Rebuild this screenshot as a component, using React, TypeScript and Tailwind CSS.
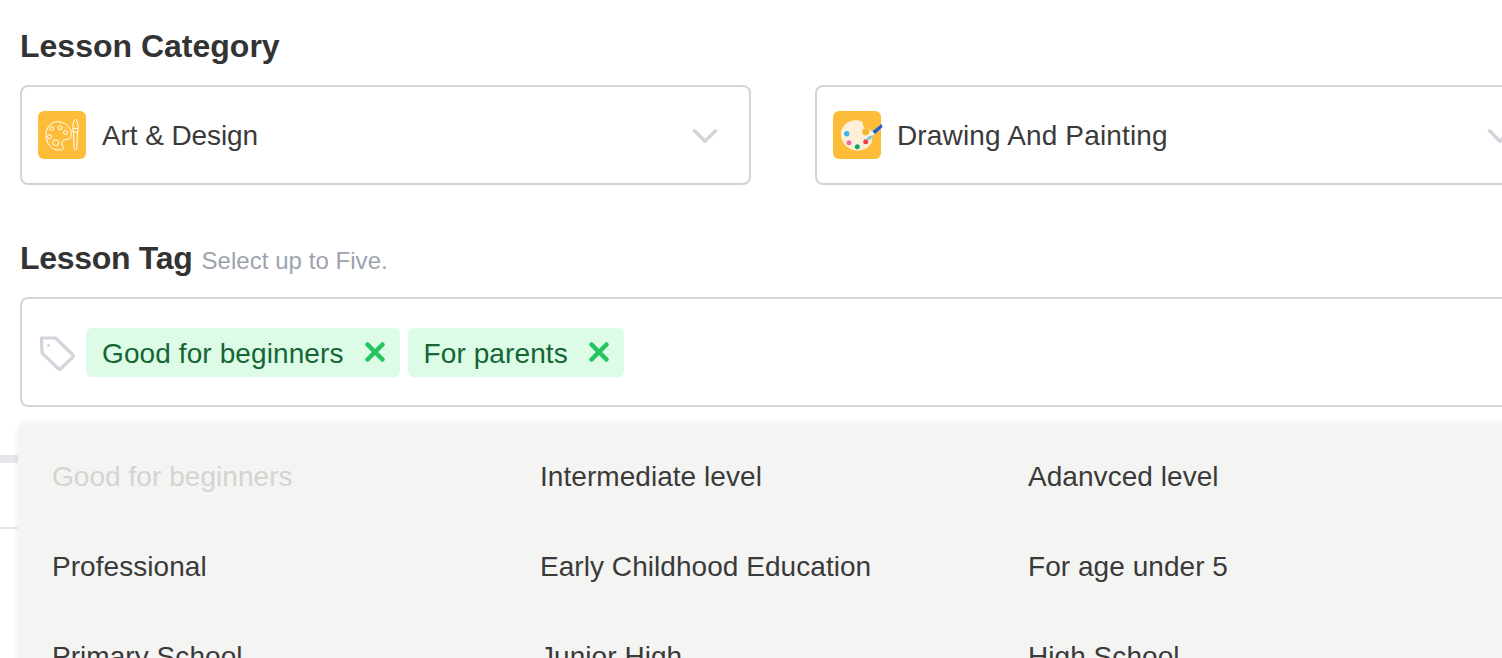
import React from 'react';
import { ChevronDown, X } from 'lucide-react';

const font = "font-['Liberation_Sans',Arial,sans-serif]";

const options = [
  { label: 'Good for beginners', disabled: true },
  { label: 'Intermediate level' },
  { label: 'Adanvced level' },
  { label: 'Professional' },
  { label: 'Early Childhood Education' },
  { label: 'For age under 5' },
  { label: 'Primary School' },
  { label: 'Junior High' },
  { label: 'High School' },
];

function ArtIcon() {
  return (
    <div className="w-12 h-12 rounded-md bg-[#fdbd39] flex items-center justify-center shrink-0">
      <svg width="48" height="48" viewBox="0 0 48 48" fill="none" stroke="#fff" strokeWidth="1">
        <path d="M22 11c-8-1.500-14 4.500-14 13 0 9 6 15 12.500 15 3.500 0 5.500-.8 5-2.500-.6-2-2.500-3-1.500-5.500.8-2 3-2.500 5-2.500 3 0 4.500-2 4.500-5 0-6-5-11.500-11.500-12.500z" />
        <circle cx="13.700" cy="17.500" r="2" />
        <circle cx="22" cy="16.700" r="2" />
        <circle cx="27.500" cy="21.500" r="2" />
        <circle cx="11.500" cy="25.700" r="2" />
        <circle cx="17.700" cy="31.700" r="3" />
        <path d="M37.500 8c2 2.500 3 5 2.500 9.500h-5c-.5-4.500.5-7 2.500-9.500z" />
        <path d="M35 17.500v3.500h5v-3.500M35.500 21l.7 16.500c0 2 2.600 2 2.600 0l.7-16.500" />
      </svg>
    </div>
  );
}

function PaletteIcon() {
  return (
    <div className="w-12 h-12 rounded-md bg-[#fdbd39] relative shrink-0">
      <svg width="50" height="48" viewBox="0 0 50 48" fill="none" className="absolute left-0 top-0">
        <path d="M26 9.500c-9-1.500-18 4-18 13.500 0 9.500 7.500 16.500 17 16.500 6 0 11-3 13.500-7.500 1.500-3-1-5 .5-8 1-2.500-.5-5-4-6-3-.8-4.500-1-5-4.500-.2-2.500-2-4-4.500-4z" fill="#fdefd8" />
        <circle cx="13.700" cy="22.700" r="2.700" fill="#3db4ec" />
        <circle cx="32.700" cy="20.700" r="3.500" fill="#f6b52e" />
        <circle cx="16" cy="31.700" r="2.500" fill="#ee6aa7" />
        <circle cx="24.300" cy="35.700" r="2.500" fill="#10a86a" />
        <circle cx="32.700" cy="30.700" r="2.500" fill="#e8413a" />
        <path d="M48.500 13 38 21.500l2.500 3L49.500 16z" fill="#1d5fd6" />
        <path d="M38.500 21l2.500 3" stroke="#fff" strokeWidth="2.500" />
        <path d="M38 24.500c-2 .5-3.800 1.500-5 4.500 2.500.5 5-.5 6.500-3z" fill="#7cc8f0" />
      </svg>
    </div>
  );
}

function TagIcon() {
  return (
    <svg width="38" height="38" viewBox="0 0 38 38" fill="none" stroke="#d1d5db" strokeWidth="3.200" strokeLinejoin="round" className="shrink-0 mr-0.5 mt-[3px]">
      <path d="M3.500 3h14L34.500 19.500a2 2 0 0 1 0 2.800L23 33.500a2 2 0 0 1-2.800 0L4 18z" />
      <circle cx="10.500" cy="10.500" r="1.500" fill="#d1d5db" stroke="none" />
    </svg>
  );
}

function Chip({ label }: { label: string }) {
  return (
    <div className="h-[49px] pl-4 pr-[10px] rounded-md bg-[#dcfce7] flex items-center gap-4 text-[#166534] text-[28px] tracking-[0.1px]">
      <span className="pt-1">{label}</span>
      <X className="w-[30px] h-[30px] text-[#22c55e]" strokeWidth={3.600} absoluteStrokeWidth />
    </div>
  );
}

function CategorySelect({ icon, label, spaced }: { icon: React.ReactNode; label: string; spaced?: boolean }) {
  return (
    <div className="w-[731px] h-[100px] shrink-0 bg-white border-2 border-[#d1d5db] rounded-lg pl-4 pr-[23px] flex items-center">
      {icon}
      <span className={`ml-4 pt-0.5 text-[28px] text-[#3a3a3a] flex-1 ${spaced ? 'tracking-[0.15px]' : 'tracking-[-0.1px]'}`}>{label}</span>
      <ChevronDown className="w-[42px] h-[42px] mt-0.5 text-[#d1d5db]" strokeWidth={2} />
    </div>
  );
}

export default function App() {
  return (
    <div className={`w-[1502px] h-[658px] relative overflow-hidden bg-white text-[#333] ${font}`}>
      {/* page behind the dropdown */}
      <div className="absolute left-0 top-[455px] w-6 h-2 bg-[#e5e7eb]" />
      <div className="absolute left-0 top-[527px] w-6 h-0.5 bg-[#e5e7eb]" />

      <div className="relative pl-5 pt-[28px] w-[1600px]">
        <h2 className="text-[32px] leading-9 font-bold text-[#333]">Lesson Category</h2>
        <div className="mt-[21px] flex gap-16">
          <CategorySelect icon={<ArtIcon />} label="Art & Design" />
          <CategorySelect icon={<PaletteIcon />} label="Drawing And Painting" spaced />
        </div>

        <div className="mt-[55px] flex items-baseline gap-[9px]">
          <h2 className="text-[32px] leading-9 font-bold text-[#333] tracking-[-0.3px]">Lesson Tag</h2>
          <span className="text-2xl text-[#9ca3af] tracking-[0.05px]">Select up to Five.</span>
        </div>
        <div className="mt-5 h-[110px] bg-white border-2 border-[#d1d5db] rounded-lg pl-4 flex items-center gap-2">
          <TagIcon />
          <Chip label="Good for beginners" />
          <Chip label="For parents" />
        </div>
      </div>

      {/* tag dropdown */}
      <div className="absolute left-[18px] top-[423px] w-[1500px] h-[300px] bg-[#f4f4f3] rounded-lg shadow-[0_0_6px_rgba(0,0,0,0.08)] pl-[34px] pt-[9px] grid grid-cols-[488px_488px_488px] auto-rows-[90px] text-[28px] tracking-[0.05px] text-[#3a3a3a]">
        {options.map((o) => (
          <div key={o.label} className={`flex items-center ${o.disabled ? 'text-[#d6d3d1]' : ''}`}>
            {o.label}
          </div>
        ))}
      </div>
    </div>
  );
}
